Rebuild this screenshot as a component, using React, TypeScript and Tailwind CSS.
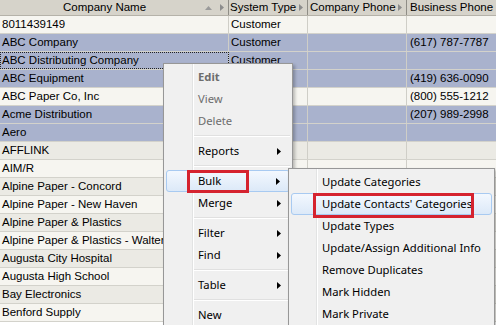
import React from "react";

type Row = { name: string; type: string; phone: string; biz: string };

// system type cells below row 2 sit under the context menu, so they stay blank
const rows: Row[] = [
  { name: "8011439149", type: "Customer", phone: "", biz: "" },
  { name: "ABC Company", type: "Customer", phone: "", biz: "(617) 787-7787" },
  { name: "ABC Distributing Company", type: "Customer", phone: "", biz: "" },
  { name: "ABC Equipment", type: "", phone: "", biz: "(419) 636-0090" },
  { name: "ABC Paper Co, Inc", type: "", phone: "", biz: "(800) 555-1212" },
  { name: "Acme Distribution", type: "", phone: "", biz: "(207) 989-2998" },
  { name: "Aero", type: "", phone: "", biz: "" },
  { name: "AFFLINK", type: "", phone: "", biz: "" },
  { name: "AIM/R", type: "", phone: "", biz: "" },
  { name: "Alpine Paper - Concord", type: "", phone: "", biz: "" },
  { name: "Alpine Paper - New Haven", type: "", phone: "", biz: "" },
  { name: "Alpine Paper & Plastics", type: "", phone: "", biz: "" },
  { name: "Alpine Paper & Plastics - Walter", type: "", phone: "", biz: "" },
  { name: "Augusta City Hospital", type: "", phone: "", biz: "" },
  { name: "Augusta High School", type: "", phone: "", biz: "" },
  { name: "Bay Electronics", type: "", phone: "", biz: "" },
  { name: "Benford Supply", type: "", phone: "", biz: "" },
];

const selected = [1, 2, 3, 5, 6];

function HeadArrow() {
  return (
    <svg width="4" height="7" viewBox="0 0 4 7" className="shrink-0">
      <path d="M0 0L4 3.5L0 7Z" fill="#8c8c8c" />
    </svg>
  );
}

function MenuArrow() {
  return (
    <svg width="4" height="7" viewBox="0 0 4 7" className="ml-auto shrink-0">
      <path d="M0 0L4 3.5L0 7Z" fill="#000" />
    </svg>
  );
}

function Item({
  label,
  arrow,
  disabled,
  bold,
  active,
}: {
  label: string;
  arrow?: boolean;
  disabled?: boolean;
  bold?: boolean;
  active?: boolean;
}) {
  return (
    <div
      className={
        "flex h-[22px] items-center pr-[9px] " +
        (active
          ? "rounded-[3px] border border-[#a8caf1] bg-gradient-to-b from-[#f3f8fe] to-[#dce9f8] pl-[31px]"
          : "pl-[32px]") +
        (disabled ? " text-[#6d6d6d]" : " text-black") +
        (bold ? " font-bold" : "")
      }
    >
      <span>{label}</span>
      {arrow && <MenuArrow />}
    </div>
  );
}

function Sep() {
  return (
    <div className="flex h-[8px] items-center pl-[28px]">
      <div className="h-[2px] w-full border-t border-[#e0e0e0] border-b border-b-white" />
    </div>
  );
}

function SubItem({ label, active }: { label: string; active?: boolean }) {
  return (
    <div
      className={
        "flex h-[22px] items-center " +
        (active
          ? "rounded-[3px] border border-[#a8caf1] bg-gradient-to-b from-[#f3f8fe] to-[#dce9f8] pl-[30px]"
          : "pl-[31px]")
      }
    >
      {label}
    </div>
  );
}

export default function App() {
  return (
    <div className="relative h-[325px] w-[496px] overflow-hidden bg-white font-['Liberation_Sans',Arial,sans-serif] text-[11.5px] text-black">
      {/* header */}
      <div className="grid h-[16px] grid-cols-[229px_79px_99px_89px] border-b border-[#b5b2a9] bg-[#d6d3ca] leading-none">
        <div className="flex items-center border-r border-[#8f8d86] pl-[63px] pr-[4px]">
          <span>Company Name</span>
          <svg width="7" height="4" viewBox="0 0 7 4" className="ml-auto mr-[8px]">
            <path d="M0 4L3.5 0L7 4Z" fill="#9a9a9a" />
          </svg>
          <HeadArrow />
        </div>
        <div className="flex items-center border-r border-[#8f8d86] pl-[1px] pr-[4px]">
          <span>System Type</span>
          <span className="ml-auto">
            <HeadArrow />
          </span>
        </div>
        <div className="flex items-center border-r border-[#8f8d86] pl-[2px] pr-[4px]">
          <span>Company Phone</span>
          <span className="ml-auto">
            <HeadArrow />
          </span>
        </div>
        <div className="flex items-center pl-[3px]">
          <span>Business Phone</span>
        </div>
      </div>

      {/* rows */}
      {rows.map((r, i) => {
        const bg = selected.includes(i)
          ? "bg-[#a9b2cd]"
          : i % 2 === 0
          ? "bg-[#f6f5f0]"
          : "bg-[#ebeae4]";
        return (
          <div
            key={r.name}
            className={"grid h-[18px] grid-cols-[229px_79px_99px_89px] border-b border-[#d3d2cb] " + bg}
          >
            <div
              className={
                "flex items-center overflow-hidden whitespace-nowrap border-r border-[#cfcec7] pl-[2px] " +
                (i === 2 ? "outline-1 outline-dotted outline-offset-[-1px] outline-[#222]" : "")
              }
            >
              {r.name}
            </div>
            <div className="flex items-center border-r border-[#cfcec7] pl-[2px]">{r.type}</div>
            <div className="flex items-center border-r border-[#cfcec7] pl-[2px]">{r.phone}</div>
            <div className="flex items-center pl-[3px]">{r.biz}</div>
          </div>
        );
      })}

      {/* context menu */}
      <div className="absolute left-[163px] top-[63px] h-[270px] w-[130px] border border-[#979797] bg-[#f0f0f0] p-[2px] font-['Noto_Sans',sans-serif] text-[11.25px] shadow-[2px_2px_3px_rgba(0,0,0,0.25)]">
        <div className="absolute bottom-0 left-[28px] top-0 w-[2px] border-l border-[#e2e3e3] border-r border-r-white" />
        <div className="relative">
          <Item label="Edit" disabled bold />
          <Item label="View" disabled />
          <Item label="Delete" disabled />
          <Sep />
          <Item label="Reports" arrow />
          <Sep />
          <Item label="Bulk" arrow active />
          <Item label="Merge" arrow />
          <Sep />
          <Item label="Filter" arrow />
          <Item label="Find" arrow />
          <Sep />
          <Item label="Table" arrow />
          <Sep />
          <Item label="New" />
        </div>
      </div>

      {/* submenu */}
      <div className="absolute left-[288px] top-[168px] h-[170px] w-[207px] border border-[#979797] bg-[#f0f0f0] p-[2px] font-['Noto_Sans',sans-serif] text-[11.25px] shadow-[2px_2px_3px_rgba(0,0,0,0.25)]">
        <div className="absolute bottom-0 left-[27px] top-0 w-[2px] border-l border-[#e2e3e3] border-r border-r-white" />
        <div className="relative">
          <SubItem label="Update Categories" />
          <SubItem label="Update Contacts' Categories" active />
          <SubItem label="Update Types" />
          <SubItem label="Update/Assign Additional Info" />
          <SubItem label="Remove Duplicates" />
          <SubItem label="Mark Hidden" />
          <SubItem label="Mark Private" />
        </div>
      </div>

      {/* annotation boxes */}
      <div className="absolute left-[187px] top-[170px] h-[23px] w-[62px] border-[3px] border-[#d5232f]" />
      <div className="absolute left-[313px] top-[193px] h-[25px] w-[161px] border-[3px] border-[#d5232f]" />
    </div>
  );
}
